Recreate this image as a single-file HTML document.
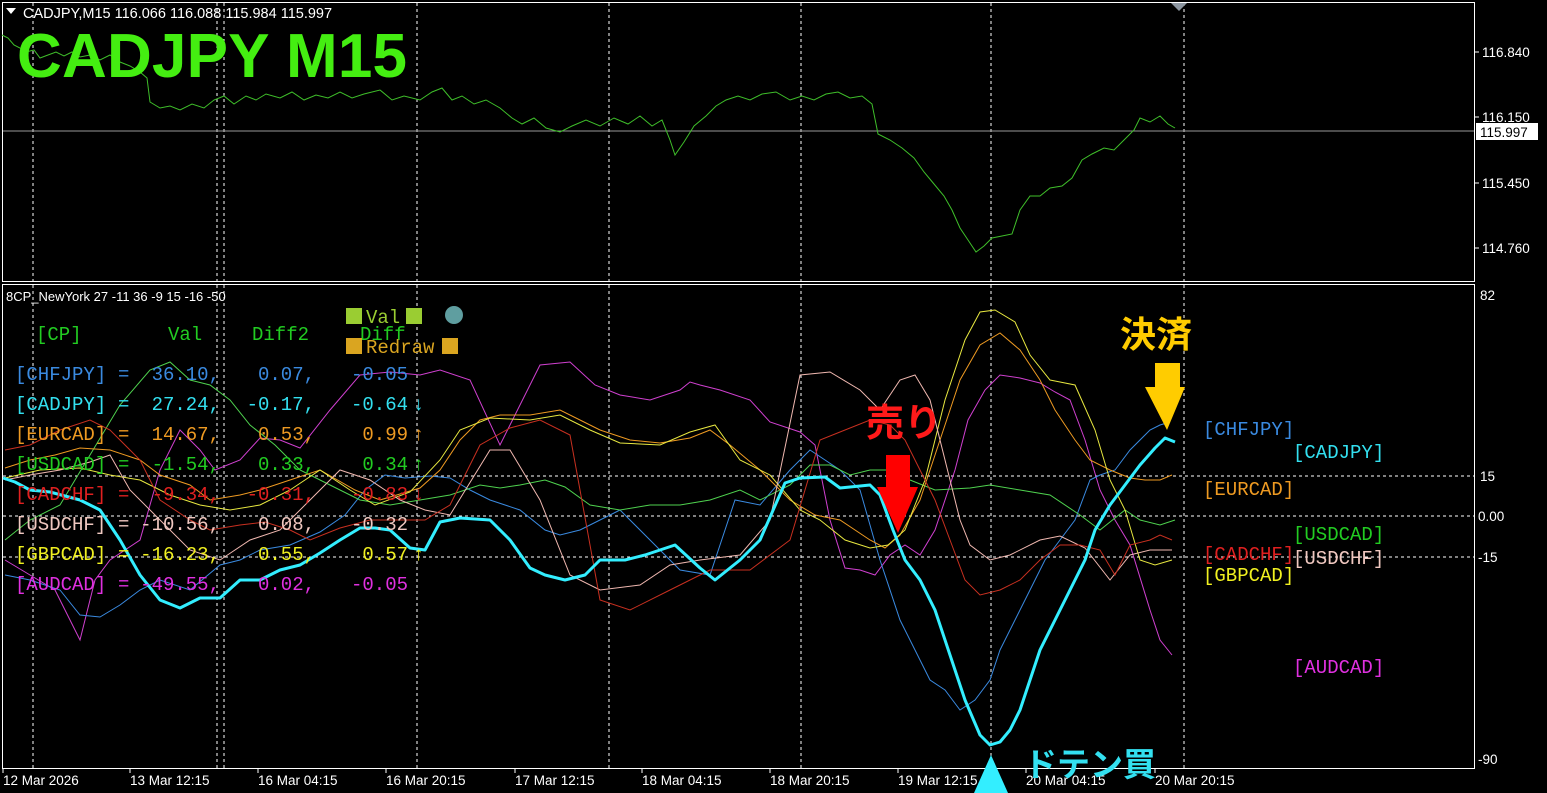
<!DOCTYPE html>
<html><head><meta charset="utf-8"><style>
html,body{margin:0;padding:0;background:#000;overflow:hidden}
svg{display:block}
.ax{font-family:"Liberation Sans",sans-serif;font-size:13.5px;fill:#fff}
.tb{font-family:"Liberation Mono","Noto Sans CJK JP",monospace;font-size:19px}
</style></head><body>
<svg width="1547" height="793" viewBox="0 0 1547 793" xmlns="http://www.w3.org/2000/svg">
<rect width="1547" height="793" fill="#000"/>
<rect x="2.5" y="2.5" width="1472" height="279" fill="none" stroke="#fff" stroke-width="1"/>
<rect x="2.5" y="284.5" width="1472" height="484" fill="none" stroke="#fff" stroke-width="1"/>
<g stroke="#fff" stroke-width="1" stroke-dasharray="3,3">
<line x1="33" y1="3" x2="33" y2="768"/><line x1="217" y1="3" x2="217" y2="768"/>
<line x1="224" y1="3" x2="224" y2="768"/><line x1="417" y1="3" x2="417" y2="768"/>
<line x1="609" y1="3" x2="609" y2="768"/><line x1="801" y1="3" x2="801" y2="768"/>
<line x1="991" y1="3" x2="991" y2="768"/><line x1="1184" y1="3" x2="1184" y2="768"/>
<line x1="3" y1="476" x2="1474" y2="476"/><line x1="3" y1="516" x2="1474" y2="516"/><line x1="3" y1="557" x2="1474" y2="557"/>
</g>
<polygon points="1171,3 1187,3 1179,11" fill="#8c96a0"/>
<line x1="3" y1="131" x2="1474" y2="131" stroke="#999" stroke-width="1"/>
<polyline fill="none" stroke="#3fbf2a" stroke-width="1" points="2,35 8,38 14,45 20,48 26,52 34,50 40,58 48,55 56,52 64,56 72,52 80,57 90,55 100,60 110,55 120,62 130,66 140,72 147,78 150,102 160,108 170,106 180,110 192,104 204,108 214,100 224,96 234,104 246,96 256,100 266,94 280,98 292,92 304,100 316,95 328,98 340,92 352,98 364,94 380,90 392,100 404,96 420,100 432,92 442,88 452,100 462,96 474,104 486,100 500,108 512,118 522,124 534,118 546,128 560,132 572,126 586,120 600,126 614,118 628,124 640,116 652,126 662,120 670,140 675,155 684,142 694,126 706,116 716,106 726,100 738,96 750,100 762,94 776,92 790,100 802,96 814,100 826,94 838,92 850,98 862,96 872,104 878,134 890,140 902,148 914,158 924,172 934,184 944,196 952,210 960,228 968,240 976,252 984,246 992,238 1002,236 1012,234 1020,210 1030,196 1040,196 1050,188 1062,186 1072,178 1082,160 1092,154 1104,148 1114,150 1124,140 1134,130 1140,118 1150,122 1160,116 1168,124 1175,128"/>
<g stroke="#fff"><line x1="1475" y1="52" x2="1479" y2="52"/><line x1="1475" y1="117" x2="1479" y2="117"/><line x1="1475" y1="183" x2="1479" y2="183"/><line x1="1475" y1="248" x2="1479" y2="248"/></g>
<text class="ax" x="1482" y="57">116.840</text>
<text class="ax" x="1482" y="122">116.150</text>
<rect x="1476" y="123" width="62" height="17" fill="#fff"/>
<text class="ax" x="1480" y="137" style="fill:#000">115.997</text>
<text class="ax" x="1482" y="188">115.450</text>
<text class="ax" x="1482" y="253">114.760</text>
<polygon points="6,8 16,8 11,14" fill="#fff"/>
<text class="ax" x="23" y="18" style="font-size:14.5px">CADJPY,M15  116.066 116.088 115.984 115.997</text>
<text x="17" y="77" style="font-family:'Liberation Sans',sans-serif;font-weight:bold;font-size:62px;fill:#44ee11" textLength="390">CADJPY  M15</text>
<text class="ax" x="1480" y="300">82</text>
<text class="ax" x="1480" y="481">15</text>
<text class="ax" x="1478" y="521">0.00</text>
<text class="ax" x="1478" y="562">-15</text>
<text class="ax" x="1478" y="764">-90</text>
<text class="ax" x="6" y="301" style="font-size:13px">8CP_NewYork 27 -11 36 -9 15 -16 -50</text>
<g stroke="#fff"><line x1="3" y1="768" x2="3" y2="773"/><line x1="130" y1="768" x2="130" y2="773"/><line x1="258" y1="768" x2="258" y2="773"/><line x1="386" y1="768" x2="386" y2="773"/><line x1="515" y1="768" x2="515" y2="773"/><line x1="642" y1="768" x2="642" y2="773"/><line x1="770" y1="768" x2="770" y2="773"/><line x1="898" y1="768" x2="898" y2="773"/><line x1="1026" y1="768" x2="1026" y2="773"/><line x1="1155" y1="768" x2="1155" y2="773"/></g>
<g class="ax"><text x="3" y="785">12 Mar 2026</text><text x="130" y="785">13 Mar 12:15</text><text x="258" y="785">16 Mar 04:15</text><text x="386" y="785">16 Mar 20:15</text><text x="515" y="785">17 Mar 12:15</text><text x="642" y="785">18 Mar 04:15</text><text x="770" y="785">18 Mar 20:15</text><text x="898" y="785">19 Mar 12:15</text><text x="1026" y="785">20 Mar 04:15</text><text x="1155" y="785">20 Mar 20:15</text></g>
<g fill="none" stroke-width="1">
<polyline stroke="#d040d0" points="5,560 30,575 55,590 70,620 80,640 95,580 110,560 140,540 160,470 180,430 200,450 215,470 240,460 260,438 280,440 300,448 330,410 360,375 390,372 420,375 440,370 470,380 500,445 540,365 570,362 595,385 620,395 650,400 680,390 690,382 700,385 720,390 750,400 770,422 800,432 815,445 830,520 845,568 860,570 875,575 890,555 905,545 920,555 935,530 955,470 968,420 985,390 1000,375 1020,378 1040,383 1055,392 1070,400 1085,440 1100,490 1115,520 1130,545 1150,610 1160,640 1172,655"/>
<polyline stroke="#3a8ae0" points="5,575 30,580 60,590 80,615 100,617 120,605 140,590 160,580 190,590 220,565 240,560 260,550 290,545 320,532 345,515 365,490 385,475 405,478 430,476 450,478 470,490 490,500 520,510 545,530 560,535 580,530 600,520 620,510 650,540 680,570 710,575 735,500 760,505 790,470 810,450 840,470 860,490 880,560 900,620 915,650 930,680 945,690 960,710 975,700 990,680 1000,650 1015,620 1030,590 1045,560 1060,540 1075,520 1090,480 1100,475 1115,470 1130,450 1150,430 1160,425 1170,422"/>
<polyline stroke="#4fd24f" points="5,540 30,520 60,505 90,455 120,405 150,370 170,362 190,380 210,385 230,400 250,425 275,445 300,470 330,485 360,500 390,505 420,500 450,495 480,485 500,488 520,485 545,480 565,487 590,505 620,510 650,505 680,505 710,500 740,490 760,500 790,485 810,465 830,465 850,475 870,470 890,470 910,480 935,490 970,488 990,485 1020,490 1050,495 1080,515 1100,530 1125,510 1140,520 1160,525 1175,520"/>
<polyline stroke="#ee9a22" points="5,468 30,460 55,455 80,448 110,450 140,460 160,475 190,485 210,500 240,495 260,490 290,480 320,470 355,490 380,500 420,488 440,470 460,440 480,420 500,415 530,415 560,410 580,420 600,430 630,440 660,443 690,438 710,430 730,445 760,470 790,500 815,515 840,520 870,540 885,548 900,535 920,500 940,440 960,380 980,345 1000,333 1020,350 1040,380 1055,410 1075,440 1090,460 1110,470 1130,478 1145,480 1160,480 1172,475"/>
<polyline stroke="#e8e840" points="5,478 40,470 80,468 110,475 140,480 170,495 200,505 230,510 260,505 290,490 320,470 350,490 375,505 410,492 440,460 460,430 490,418 530,420 560,415 590,430 620,443 660,445 690,432 715,425 740,460 770,475 800,510 820,520 845,540 870,548 888,545 905,530 925,480 945,400 965,340 980,312 995,310 1015,322 1030,355 1050,380 1075,385 1095,430 1110,480 1125,510 1140,560 1155,565 1172,560"/>
<polyline stroke="#f0b8b0" points="5,480 30,475 60,470 90,462 110,455 130,490 160,520 190,550 220,560 250,540 280,530 310,500 340,470 370,480 400,500 425,510 450,515 490,450 510,450 540,500 570,575 600,590 640,585 670,565 700,560 740,555 770,520 800,375 830,372 860,390 880,410 900,380 915,375 930,400 945,460 960,520 970,545 990,560 1010,555 1040,540 1060,536 1085,548 1110,580 1130,555 1150,550 1172,550"/>
<polyline stroke="#c83020" points="5,450 30,445 60,430 90,420 110,430 140,460 160,500 190,520 210,530 240,525 265,522 290,530 310,540 340,528 370,520 400,520 425,520 450,505 480,445 510,428 540,420 570,435 600,600 630,610 670,590 710,570 750,570 790,540 820,440 840,432 870,420 890,425 905,440 920,470 935,500 950,540 965,580 980,595 1000,590 1020,580 1040,560 1060,545 1080,545 1100,550 1115,575 1130,545 1150,540 1160,535 1172,540"/>
<polyline stroke="#33eeff" stroke-width="3" stroke-linejoin="round" points="3,478 15,482 30,490 50,492 80,500 100,510 120,540 140,575 160,600 180,608 200,598 220,598 240,580 260,580 280,570 300,565 320,553 340,540 360,528 375,528 390,530 410,548 425,550 440,522 460,518 490,520 510,540 530,568 545,575 565,580 585,575 600,560 625,560 645,555 660,550 675,545 700,568 715,580 740,560 760,540 785,483 800,478 825,477 840,488 870,485 880,495 893,530 905,560 920,580 935,610 950,655 965,700 980,735 990,745 1000,742 1010,730 1020,710 1030,680 1040,650 1055,620 1070,590 1085,560 1095,530 1110,505 1125,485 1140,465 1155,448 1165,438 1175,442"/>
</g>
<g class="tb">
<text x="36" y="340" fill="#22cc22">[CP]</text>
<text x="168" y="340" fill="#22cc22">Val</text>
<text x="252" y="340" fill="#22cc22">Diff2</text>
<text x="360" y="340" fill="#22cc22">Diff</text>
<g fill="#3a8ae0"><text x="15" y="380">[CHFJPY]</text><text x="118" y="380">=</text><text x="220" y="380" text-anchor="end">36.10,</text><text x="315" y="380" text-anchor="end">0.07,</text><text x="408" y="380" text-anchor="end">-0.05</text></g>
<g fill="#33e0f0"><text x="15" y="410">[CADJPY]</text><text x="118" y="410">=</text><text x="220" y="410" text-anchor="end">27.24,</text><text x="315" y="410" text-anchor="end">-0.17,</text><text x="408" y="410" text-anchor="end">-0.64</text><text x="413" y="410">↓</text></g>
<g fill="#ee9a22"><text x="15" y="440">[EURCAD]</text><text x="118" y="440">=</text><text x="220" y="440" text-anchor="end">14.67,</text><text x="315" y="440" text-anchor="end">0.53,</text><text x="408" y="440" text-anchor="end">0.99</text><text x="413" y="440">↑</text></g>
<g fill="#22cc22"><text x="15" y="470">[USDCAD]</text><text x="118" y="470">=</text><text x="220" y="470" text-anchor="end">-1.54,</text><text x="315" y="470" text-anchor="end">0.33,</text><text x="408" y="470" text-anchor="end">0.34</text><text x="413" y="470">↑</text></g>
<g fill="#e02020"><text x="15" y="500">[CADCHF]</text><text x="118" y="500">=</text><text x="220" y="500" text-anchor="end">-9.34,</text><text x="315" y="500" text-anchor="end">-0.31,</text><text x="408" y="500" text-anchor="end">-0.83</text><text x="413" y="500">↓</text></g>
<g fill="#f0c8c0"><text x="15" y="530">[USDCHF]</text><text x="118" y="530">=</text><text x="220" y="530" text-anchor="end">-10.56,</text><text x="315" y="530" text-anchor="end">0.08,</text><text x="408" y="530" text-anchor="end">-0.32</text></g>
<g fill="#f0f020"><text x="15" y="560">[GBPCAD]</text><text x="118" y="560">=</text><text x="220" y="560" text-anchor="end">-16.23,</text><text x="315" y="560" text-anchor="end">0.55,</text><text x="408" y="560" text-anchor="end">0.57</text><text x="413" y="560">↑</text></g>
<g fill="#e030e0"><text x="15" y="590">[AUDCAD]</text><text x="118" y="590">=</text><text x="220" y="590" text-anchor="end">-49.55,</text><text x="315" y="590" text-anchor="end">0.02,</text><text x="408" y="590" text-anchor="end">-0.05</text></g>
<rect x="346" y="308" width="16" height="16" fill="#9acd32"/><text x="366" y="323" fill="#9acd32">Val</text><rect x="406" y="308" width="16" height="16" fill="#9acd32"/>
<circle cx="454" cy="315" r="9" fill="#5f9ea0"/>
<rect x="346" y="338" width="16" height="16" fill="#daa520"/><text x="366" y="353" fill="#daa520">Redraw</text><rect x="442" y="338" width="16" height="16" fill="#daa520"/>
<text x="1203" y="435" fill="#3a8ae0">[CHFJPY]</text>
<text x="1293" y="458" fill="#33e0f0">[CADJPY]</text>
<text x="1203" y="495" fill="#ee9a22">[EURCAD]</text>
<text x="1293" y="540" fill="#22cc22">[USDCAD]</text>
<text x="1203" y="560" fill="#e02020">[CADCHF]</text>
<text x="1293" y="564" fill="#f0c8c0">[USDCHF]</text>
<text x="1203" y="581" fill="#f0f020">[GBPCAD]</text>
<text x="1293" y="673" fill="#e030e0">[AUDCAD]</text>
</g>
<text x="866" y="436" style="font-family:'Noto Sans CJK JP',sans-serif;font-weight:bold;font-size:38px;fill:#ff1a1a">売り</text>
<polygon points="886,455 910,455 910,487 918,487 898,533 877,487 886,487" fill="#ff0000"/>
<text x="1120" y="347" style="font-family:'Noto Sans CJK JP',sans-serif;font-weight:bold;font-size:36px;fill:#ffcc00">決済</text>
<polygon points="1155,363 1180,363 1180,387 1185,387 1167,430 1145,387 1155,387" fill="#ffcc00"/>
<text x="1024" y="776" style="font-family:'Noto Sans CJK JP',sans-serif;font-weight:bold;font-size:33px;fill:#33e0f0">ドテン買</text>
<polygon points="991,755 1008,793 974,793" fill="#33eeff"/>
</svg>
</body></html>
